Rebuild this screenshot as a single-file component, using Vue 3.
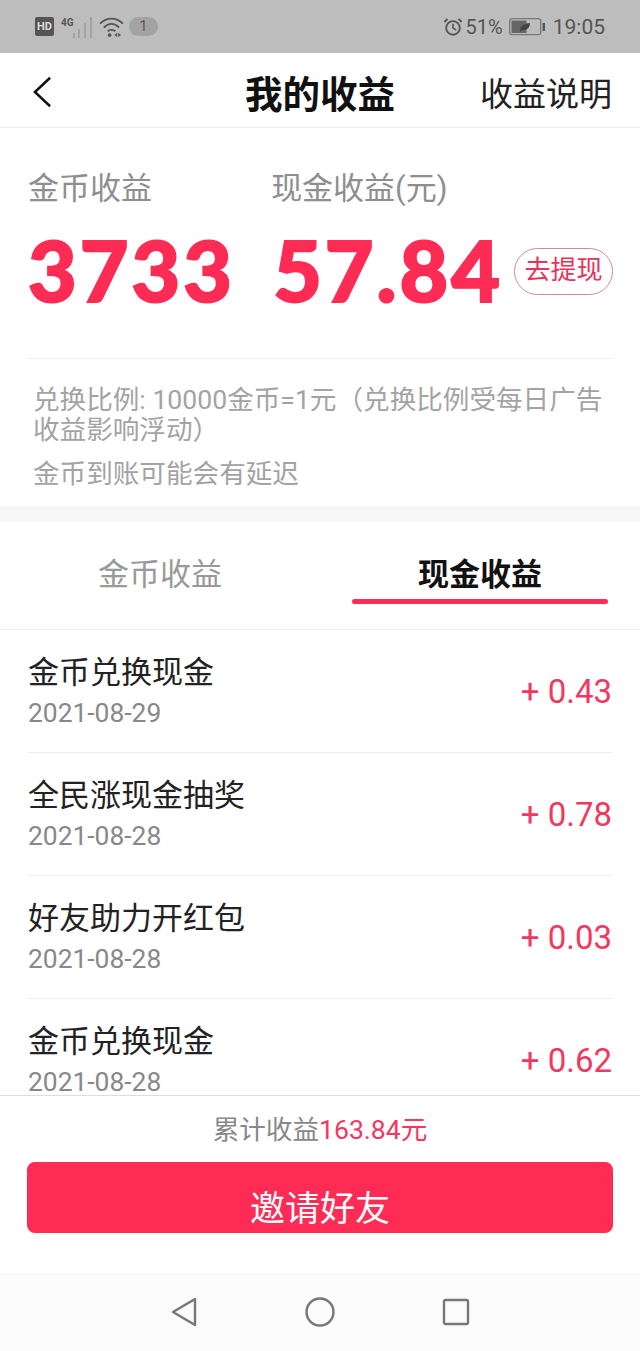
<template>
  <div class="page">
    <div class="status">
      <div class="status-left">
        <span class="hd">HD</span>
        <span class="net">4G</span>
        <svg class="signal" width="22" height="22" viewBox="0 0 22 22">
          <rect x="1" y="17" width="2" height="5" fill="#a3a3a3" />
          <rect x="6" y="13" width="2" height="9" fill="#a3a3a3" />
          <rect x="12" y="7" width="2" height="15" fill="#a3a3a3" />
          <rect x="18" y="1" width="2" height="21" fill="#a3a3a3" />
        </svg>
        <svg class="wifi" width="25" height="20" viewBox="0 0 26 21">
          <path d="M1 7 C8 0 18 0 25 7" fill="none" stroke="#555" stroke-width="2" />
          <path d="M5 11 C10 6 16 6 21 11" fill="none" stroke="#555" stroke-width="2" />
          <path d="M9 15 C11 13 15 13 17 15" fill="none" stroke="#555" stroke-width="2" />
          <circle cx="11" cy="19" r="2" fill="#555" />
          <path d="M16 19 L19 16.5 V21 Z M20 16.5 L23 19 L20 21 Z" fill="#555" />
        </svg>
        <span class="count">1</span>
      </div>
      <div class="status-right">
        <svg width="20" height="20" viewBox="0 0 22 22">
          <circle cx="11" cy="12" r="7.5" fill="none" stroke="#555" stroke-width="2" />
          <path d="M11 7.5 V12 L14.5 14.5" fill="none" stroke="#555" stroke-width="1.8" />
          <path d="M1.5 5.5 L5 2 M20.5 5.5 L17 2" stroke="#555" stroke-width="2" />
        </svg>
        <span class="pct">51%</span>
        <svg width="36" height="18" viewBox="0 0 36 18">
          <rect x="0.7" y="0.7" width="31" height="16" rx="2.5" fill="none" stroke="#777" stroke-width="1.3" />
          <rect x="2.5" y="2.5" width="15" height="12.5" fill="#666" />
          <rect x="33.6" y="5" width="2.4" height="8" fill="#555" />
          <path d="M11 12.5 C12 7 16 5.5 21 5 C21 10 17 13 13 12 L11 14 Z" fill="#444" />
        </svg>
        <span class="clock">19:05</span>
      </div>
    </div>

    <header class="topbar">
      <svg class="back" width="19" height="34" viewBox="0 0 20 34">
        <path d="M18 2 L2 17 L18 32" fill="none" stroke="#111" stroke-width="2.6" />
      </svg>
      <h1 class="title">我的收益</h1>
      <span class="explain">收益说明</span>
    </header>

    <section class="summary">
      <div class="totals">
        <div class="total coin">
          <div class="total-label">金币收益</div>
          <div class="total-num">3733</div>
        </div>
        <div class="total">
          <div class="total-label">现金收益(元)</div>
          <div class="total-row">
            <div class="total-num">57.84</div>
            <span class="withdraw">去提现</span>
          </div>
        </div>
      </div>
      <div class="notes">
        <p class="rate">兑换比例: 10000金币=1元（兑换比例受每日广告收益影响浮动）</p>
        <p class="delay">金币到账可能会有延迟</p>
      </div>
    </section>

    <div class="band"></div>

    <nav class="tabs">
      <div class="tab">金币收益</div>
      <div class="tab active">现金收益</div>
    </nav>

    <ul class="list">
      <li v-for="item in items" :key="item.title + item.date + item.amount" class="row">
        <div>
          <div class="row-title">{{ item.title }}</div>
          <div class="row-date">{{ item.date }}</div>
        </div>
        <div class="row-amount">+ {{ item.amount }}</div>
      </li>
    </ul>

    <footer class="footer">
      <div class="sum">累计收益<span class="sum-val">163.84元</span></div>
      <button class="invite">邀请好友</button>
    </footer>

    <div class="navbar">
      <svg width="28" height="30" viewBox="0 0 28 30">
        <path d="M25 2 V28 L3 15 Z" fill="none" stroke="#777" stroke-width="2.4" stroke-linejoin="round" />
      </svg>
      <svg width="30" height="30" viewBox="0 0 30 30">
        <circle cx="15" cy="15" r="13.5" fill="none" stroke="#777" stroke-width="2.4" />
      </svg>
      <svg width="28" height="28" viewBox="0 0 28 28">
        <rect x="2" y="2" width="24" height="24" rx="1.5" fill="none" stroke="#777" stroke-width="2.4" />
      </svg>
    </div>
  </div>
</template>

<script setup>
const items = [
  { title: '金币兑换现金', date: '2021-08-29', amount: '0.43' },
  { title: '全民涨现金抽奖', date: '2021-08-28', amount: '0.78' },
  { title: '好友助力开红包', date: '2021-08-28', amount: '0.03' },
  { title: '金币兑换现金', date: '2021-08-28', amount: '0.62' }
]
</script>

<style>
html, body {
  margin: 0;
  background: #fff;
}
</style>

<style scoped>
.page {
  width: 640px;
  height: 1351px;
  display: flex;
  flex-direction: column;
  overflow: hidden;
  background: #fff;
  font-family: Roboto, "Noto Sans CJK SC", sans-serif;
}

.status {
  height: 53px;
  flex: none;
  background: #bdbdbd;
  display: flex;
  align-items: center;
  justify-content: space-between;
  padding: 0 35px;
  color: #555;
  box-sizing: border-box;
}

.status-left,
.status-right {
  display: flex;
  align-items: center;
}

.hd {
  width: 19px;
  height: 19px;
  background: #555;
  color: #ddd;
  border-radius: 2px;
  font-size: 11px;
  font-weight: 700;
  line-height: 19px;
  text-align: center;
}

.net {
  width: 12px;
  font-size: 10px;
  font-weight: 700;
  margin: -9px 0 0 7px;
}

.signal {
  margin-left: -1px;
}

.wifi {
  margin-left: 5px;
}

.count {
  width: 29px;
  height: 19px;
  margin-left: 5px;
  border-radius: 10px;
  background: #a3a3a3;
  font-size: 14px;
  line-height: 19px;
  text-align: center;
}

.status-right {
  gap: 3px;
}

.pct {
  font-size: 20px;
  margin-right: 3px;
}

.clock {
  font-size: 21px;
  margin-left: 5px;
}

.topbar {
  height: 75px;
  flex: none;
  box-sizing: border-box;
  border-bottom: 1px solid #eee;
  display: flex;
  align-items: center;
  padding: 3px 28px 0 33px;
}

.title {
  margin: 0 0 0 193px;
  width: 150px;
  font-size: 37.5px;
  font-weight: 700;
  color: #111;
  white-space: nowrap;
}

.explain {
  margin-left: auto;
  font-size: 33px;
  color: #222;
  white-space: nowrap;
}

.summary {
  flex: none;
  height: 378px;
  box-sizing: border-box;
  padding: 0 27px 0 28px;
}

.totals {
  height: 231px;
  box-sizing: border-box;
  border-bottom: 1px solid #eee;
  display: flex;
  padding-top: 43px;
}

.coin {
  width: 245px;
}

.total-label {
  font-size: 31px;
  line-height: 36px;
  color: #8e8e8e;
}

.total-row {
  display: flex;
  align-items: center;
}

.total-num {
  font-family: Lato, sans-serif;
  font-weight: 900;
  font-size: 84px;
  line-height: 100px;
  letter-spacing: 3px;
  -webkit-text-stroke: 2px #fe2c55;
  color: #fe2c55;
  margin-top: 13px;
}

.total-row .total-num {
  margin-left: 2px;
}

.withdraw {
  margin: 16px 0 0 11px;
  width: 99px;
  height: 47px;
  box-sizing: border-box;
  border: 1px solid #c98ba0;
  border-radius: 24px;
  color: #e8325a;
  font-size: 26px;
  line-height: 43px;
  text-align: center;
}

.notes {
  padding: 26px 0 0 5px;
  font-size: 26.6px;
  color: #a3a3a3;
}

.notes p {
  margin: 0;
}

.rate {
  line-height: 30px;
}

.delay {
  margin-top: 13px !important;
  line-height: 32px;
}

.band {
  height: 16px;
  flex: none;
  background: #f6f6f6;
}

.tabs {
  height: 108px;
  flex: none;
  box-sizing: border-box;
  border-bottom: 1px solid #eee;
  display: flex;
}

.tab {
  width: 320px;
  text-align: center;
  font-size: 31px;
  line-height: 38px;
  padding-top: 34px;
  color: #999;
  position: relative;
}

.tab.active {
  color: #111;
  font-weight: 700;
}

.tab.active::after {
  content: "";
  position: absolute;
  left: 32px;
  right: 32px;
  top: 77px;
  height: 5px;
  border-radius: 3px;
  background: #fe2c55;
}

.list {
  list-style: none;
  margin: 0;
  padding: 0 28px;
  flex: none;
  height: 465px;
  box-sizing: border-box;
}

.row {
  height: 123px;
  box-sizing: border-box;
  border-bottom: 1px solid #eee;
  display: flex;
  align-items: center;
  justify-content: space-between;
  padding-top: 1px;
}

.row-title {
  font-size: 31px;
  line-height: 38px;
  color: #222;
}

.row-date {
  font-size: 26.4px;
  line-height: 24px;
  color: #888;
  margin: 9px 0 4px;
}

.row-amount {
  font-size: 33px;
  color: #f2385f;
}

.footer {
  flex: none;
  position: relative;
  height: 178px;
  box-sizing: border-box;
  background: #fff;
  border-top: 1px solid #ddd;
  padding: 17px 27px 0;
  text-align: center;
}

.sum {
  font-size: 26.6px;
  line-height: 34px;
  color: #888;
}

.sum-val {
  color: #f2385f;
}

.invite {
  display: block;
  width: 586px;
  height: 71px;
  margin-top: 15px;
  padding: 16px 0 0;
  border: none;
  border-radius: 8px;
  background: #fe2c55;
  color: #fff;
  font-family: inherit;
  font-size: 35px;
}

.navbar {
  flex: 1;
  background: #fbfbfb;
  display: flex;
  align-items: center;
  justify-content: center;
  gap: 107px;
}
</style>
